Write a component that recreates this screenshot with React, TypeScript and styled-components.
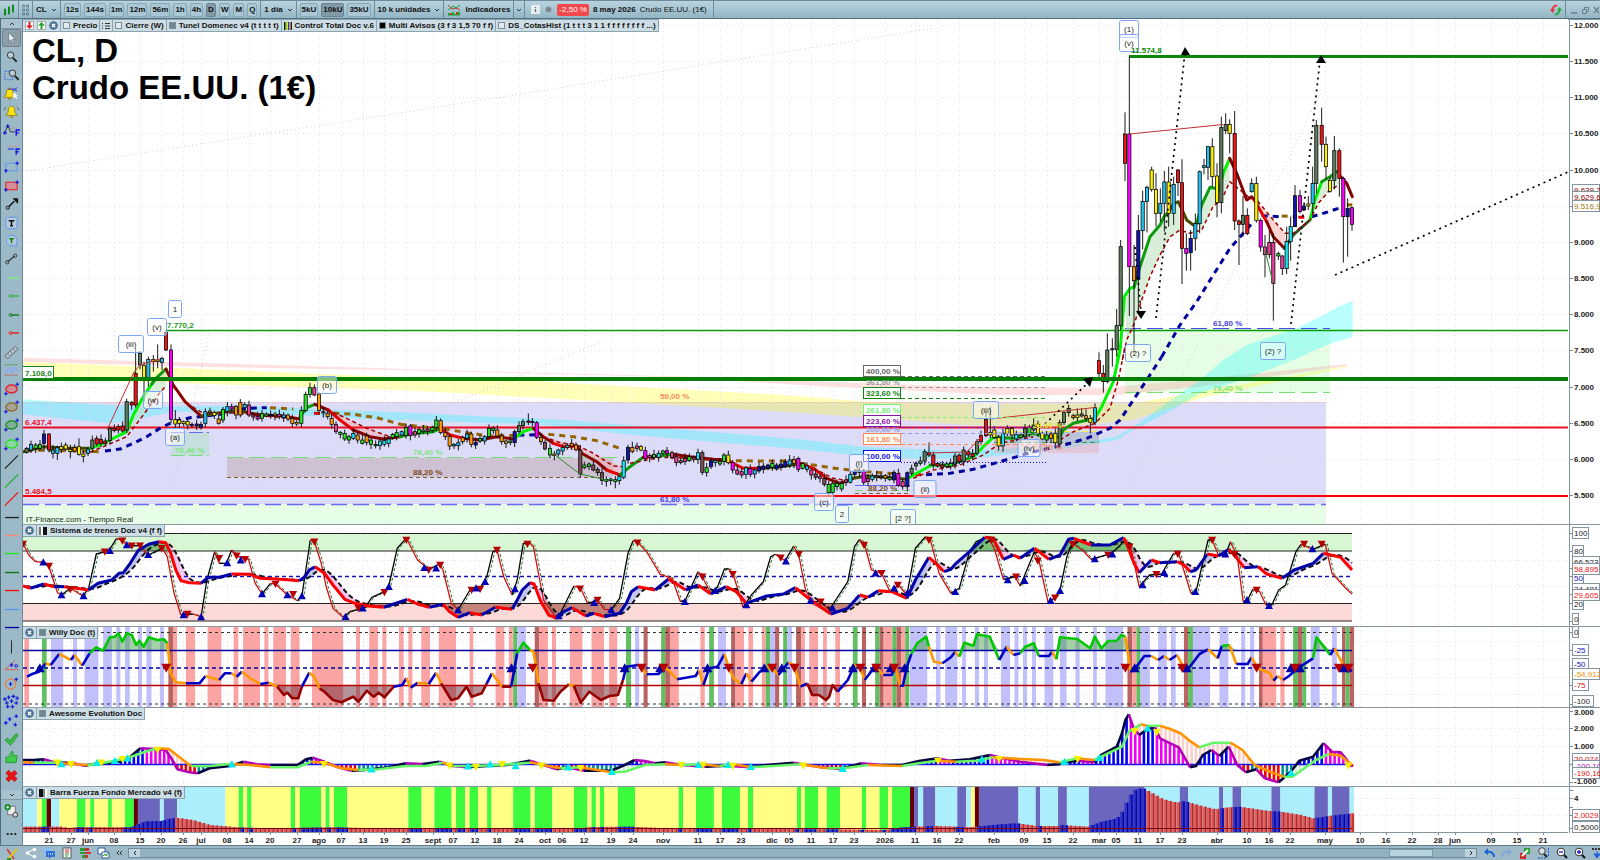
import React from "react";
import styled, { createGlobalStyle } from "styled-components";

/* ---------- shared values ---------- */

const FONT = `"Liberation Sans", Arial, sans-serif`;
const BLUE = "#0000a8";

type Pt = [number, number];

/* Reads "x,y x,y ..." given in units of a chart tile and places it on the chart. */
const at = (ox: number, oy: number, sx: number, text: string): Pt[] =>
  text
    .trim()
    .split(/\s+/)
    .map((p) => {
      const [x, y] = p.split(",").map(Number);
      return [Math.round((ox + x / sx) * 10) / 10, Math.round((oy + y / 3) * 10) / 10] as Pt;
    });

const tiles = (a: string, b: string, c: string): Pt[] => [
  ...at(0, 520, 2.958, a),
  ...at(530, 520, 2.958, b),
  ...at(1060, 520, 2.904, c),
];

const str = (pts: Pt[]) => pts.map((p) => p.join(",")).join(" ");

const valueAt = (pts: Pt[], x: number) => {
  if (x <= pts[0][0]) return pts[0][1];
  for (let i = 1; i < pts.length; i++) {
    if (x <= pts[i][0]) {
      const [x0, y0] = pts[i - 1];
      const [x1, y1] = pts[i];
      return x1 === x0 ? y1 : y0 + ((y1 - y0) * (x - x0)) / (x1 - x0);
    }
  }
  return pts[pts.length - 1][1];
};

const STEP = 4.335;
const FIRST = 22;
const LAST = 1352;
const bars: number[] = [];
for (let x = LAST; x > FIRST; x -= STEP) bars.unshift(x);

/* ---------- price chart data ---------- */

const CANDLE: Record<string, string> = {
  g: "#5d7d5d",
  r: "#f01414",
  m: "#ff00ff",
  c: "#25c1f4",
  a: "#18e4f4",
  y: "#fff200",
  o: "#ff9a0a",
  b: "#1414b4",
  k: "#ea3f9c",
  l: "#28e628",
  n: "#7c5055",
};

interface Candle {
  x: number;
  top: number;
  bottom: number;
  high: number;
  low: number;
  kind: string;
}

const candles = (ox: number, oy: number, text: string): Candle[] =>
  text
    .trim()
    .split(/\s+/)
    .map((t, i) => {
      const m = /^(\d+)([a-z])(\d+)-(\d+)(?:\^(\d+))?(?:_(\d+))?$/.exec(t)!;
      const top = +m[3];
      const bottom = +m[4];
      const high = m[5] ? +m[5] : top - 4 - ((i * 7) % 12);
      const low = m[6] ? +m[6] : bottom + 4 + ((i * 5) % 11);
      return {
        x: ox + +m[1] / 3,
        top: oy + top / 3,
        bottom: oy + bottom / 3,
        high: oy + high / 3,
        low: oy + low / 3,
        kind: m[2],
      };
    });

const PRICES: Candle[] = [
  ...candles(0, 215, `80g700-712 93c688-705 107l690-700 120l688-700 132b657-685^645_710 147r657-705^655_712 159c705-715^690_730
    172c697-715_735 184y695-703 197y690-702 211y703-710_730 224o697-708 237y695-718^670_722 250y717-724_742 264c702-715
    277g675-700 290r670-687 303r673-685 316r678-686 330g640-677 343r640-647 355r635-645 368r633-648 380g560-645 395r562-570
    407r475-570^400 420g415-450^408 432y452-487^440_560 445c433-487^425_515 460y433-440^420_470 473y435-440^388_460
    486c430-442^425_465 498r352-405^345_408 513m405-613^388_625 526y614-627^585_640 538y615-625 551y620-626 563y620-630
    576m628-632 590b627-633 603b628-638 616c590-625^580 630o588-592 643y592-602 656o612-625 669l583-615 682c575-590
    695m575-582 708o574-600 721o563-600 734c568-578 747k570-600 760k600-606 773m605-612 786l595-610 799l597-603 812b598-602
    825y597-602 838k598-605 851c600-608 864o600-612 877o610-625 890y622-627 904l587-625 917l538-587 930l518-538 943k518-540
    957o537-587 970k590-594 983o595-605 995o610-628 1008k628-650 1021l652-658 1034l655-672 1047l665-675 1060a655-670
    1073o660-675 1087l675-685 1100o663-682 1113l675-688 1127l688-692 1140a678-692 1153a677-688 1166a672-685 1178l658-668
    1190l653-665`),
  ...candles(400, 340, `5c275-285 18l262-287 31m258-287 45k275-285 57l268-280 70l270-275 83k268-274 97l262-272 109l240-262^228
    122o242-278 136o278-290 149o290-318_330 162c313-318 175c308-317 188o293-305 201c282-295 214o282-313^275_322 227b307-315
    240l295-303 254c290-303 267l265-290 280l265-272 292o270-288 305o288-305 318o303-310 331l303-308 344b275-308 357g257-275
    369g245-257 385r243-246^220_255 397m244-248 410m248-292 423o292-305 435n307-327 450l325-345 463o342-347 475c330-342
    488a323-333 502a316-322 515o310-318 528o315-328 541n330-402 553l375-383 567l372-380 580n375-390 593n388-398 606n398-421
    619l418-424_440 632l417-422 646l419-425_445 658a410-422 671a362-412 684b322-360 697o322-335^305 711k318-325 723y320-330
    736m332-355 749k347-353 762l343-352 776a340-352 789l333-340 801m332-340 816k338-352 829k350-368 842n362-368 855k355-365
    868l350-362 881k352-358 894a338-358 907n338-397 920l383-397 933b362-380 946a362-368 960l365-372 972l345-365 985y345-368
    998m368-390 1012k390-402 1025k395-405 1038a383-403 1051m385-403 1064c390-402 1077b380-393 1090b378-388 1104b375-385
    1117l370-382 1130b375-387 1143b372-382 1156b365-380 1169c360-375 1182o358-370 1195m355-388`),
  ...candles(800, 340, `8l370-385 21c378-388 34k390-405 47n402-412 60k410-415 73n415-433 86l433-458 98l430-457 111l430-440
    125l430-447_455 138k420-428 151a403-427 164b393-403 178l393-397 191m392-427 204k415-425 217a408-418 230n407-412
    243n408-413 256o407-414 269l412-418 282b397-420 295m400-437 308k425-440 322b398-440 335g385-400 348g370-378 361l363-370
    374g335-363 387r338-345^307 400r345-375 413r370-378 427r375-382 440l372-380 452l370-380 465g348-372 478r345-365
    491g330-365 505r335-345 518r340-350 531g305-340 543r287-305 558r238-287^215 571y278-285^200 583y270-292 596y292-318_332
    609a280-318_335 622y265-280 636y265-285 649a283-297 662l285-293 675g265-290 688l262-280 701g255-270^235 714y252-280
    727y280-297 740l285-300 753o282-295 766y280-308 779g248-312 792g218-248 806g205-218 820o227-233 832y225-232^205
    845g222-228^205 858o227-235^208 871y235-247_280 885c203-247^190`),
  ...candles(1080, 0, `57r1082-1120^1057_1138 70r1120-1145^1095_1178 82g1050-1145^1000_1150 97g1046-1049^1015_1100 110g977-1048^927_1070
    122g740-977^720_992 135r402-490^337_543 148m402-800^170_948 162o800-842^735_1060 175b692-838^645_940 188c604-692^572_748
    201c562-604^557_697 215y510-568^500_575 228y568-640^520_680 241c610-640^565_665 253c546-610^513_695 266y546-640^500_680
    281c553-640^530_675 294r510-548^507_588 306r548-745^478_852 319m745-760^700_812 332b715-758^690_812 346c671-715^640_752
    359c515-671^512_700 372c497-502^477_523 384c440-502^438_540 397y440-530^415_560 411y528-608^490_652 424g382-608^350_640
    437g373-392^340_402 449y373-400^358_460 464r400-663^333_690 477r663-673^658_795 489g646-673^588_710 502r646-701^625_705
    515c550-575^535_578 529y550-661^530_668 542m661-741^655_755 555k741-764^705_832 568k727-764^692_775 580k727-850^700_962
    595l761-768^755_780 607k768-806^765_825 620a724-806^680_822 632a680-724^650_782 645b587-680^555_681 660m587-635^570_640
    672b618-630^610_632 685y612-618^588_630 698c550-610^500_640 709g376-550^360_580 725r376-433^323_485 738y433-500^410_538
    750y541-574^530_578 763g452-541^408_568 778r452-535^445_590 790m535-650^530_788 803b625-650^595_770 816m623-673^620_692`),
];

interface Stroke {
  pts: Pt[];
  color: string;
}
const s3 = (ox: number, oy: number, color: string, text: string): Stroke => ({ pts: at(ox, oy, 3, text), color });

const LIME = "#00f500";
const GREEN = "#0d9a0d";
const WINE = "#850000";
const RED = "#e40000";
const MOSS = "#4a4a00";

const TREND: Stroke[] = [
  s3(0, 215, MOSS, "70,710 130,695 200,700 270,700"),
  s3(0, 215, LIME, "270,700 300,690 380,650 400,600 430,545 460,500"),
  s3(0, 215, GREEN, "455,507 470,488 498,462"),
  s3(0, 215, WINE, "498,462 520,510 555,560 605,605"),
  s3(0, 215, MOSS, "605,603 650,595 700,588 740,592"),
  s3(0, 215, WINE, "740,592 780,600 840,602 900,612"),
  s3(0, 215, GREEN, "900,605 920,578 945,568"),
  s3(0, 215, WINE, "945,568 985,585"),
  s3(0, 215, RED, "985,585 1020,615 1060,645"),
  s3(0, 215, WINE, "1060,645 1110,665 1150,672 1200,665"),
  s3(400, 340, GREEN, "0,290 30,282 100,275 120,265"),
  s3(400, 340, RED, "120,265 150,285 190,295"),
  s3(400, 340, WINE, "190,295 240,300 290,290 340,297"),
  s3(400, 340, LIME, "350,290 370,275 400,265"),
  s3(400, 340, WINE, "400,265 430,290 460,310"),
  s3(400, 340, RED, "460,310 490,320 530,318"),
  s3(400, 340, WINE, "530,318 545,340 590,365 620,390"),
  s3(400, 340, RED, "620,390 660,405"),
  s3(400, 340, GREEN, "660,405 690,380 730,352"),
  s3(400, 340, WINE, "730,352 780,348"),
  s3(400, 340, GREEN, "780,348 820,343"),
  s3(400, 340, WINE, "820,343 870,350 940,358 980,360"),
  s3(400, 340, RED, "980,360 1000,370 1030,385 1080,385"),
  s3(400, 340, MOSS, "1080,385 1140,380 1200,372"),
  s3(800, 340, RED, "0,370 40,385 80,415"),
  s3(800, 340, WINE, "80,415 120,430 160,415"),
  s3(800, 340, MOSS, "160,415 200,408 260,412 320,418"),
  s3(800, 340, LIME, "330,412 350,400 390,378"),
  s3(800, 340, GREEN, "390,375 450,375 520,350"),
  s3(800, 340, LIME, "520,350 550,320 580,292"),
  s3(800, 340, GREEN, "580,292 640,295 700,280 740,290 780,290 790,270 820,250 885,235"),
  s3(800, 340, LIME, "885,235 905,200 940,125 962,20"),
  s3(1080, 0, LIME, "112,1085 122,1030 133,890 150,865 162,862"),
  s3(1080, 0, GREEN, "162,862 180,800 210,710 240,675 255,645 265,638"),
  s3(1080, 0, MOSS, "265,638 280,612 295,605 320,660 340,675 350,670"),
  s3(1080, 0, GREEN, "350,670 365,615 390,562 405,565 418,570"),
  s3(1080, 0, LIME, "418,570 430,520 449,475"),
  s3(1080, 0, WINE, "449,475 470,520 500,600 515,590 523,600"),
  s3(1080, 0, RED, "523,600 540,630 560,665"),
  s3(1080, 0, WINE, "560,665 580,710 613,745"),
  s3(1080, 0, "#245624", "613,745 640,705 690,660"),
  s3(1080, 0, LIME, "690,660 705,600 725,545"),
  s3(1080, 0, GREEN, "725,545 750,530 770,515"),
  s3(1080, 0, WINE, "782,530 800,550 817,590"),
];

const SIGNAL: Stroke[] = [
  s3(0, 215, "#a00000", "270,712 380,665 430,600 470,545 498,512"),
  s3(0, 215, "#a00000", "520,515 560,565 610,595 680,592 780,602 890,612"),
  s3(0, 215, "#a00000", "980,585 1030,605 1100,640 1170,665"),
  s3(400, 340, "#a00000", "430,290 480,308 530,315 580,340 640,378 665,380"),
  s3(400, 340, "#a00000", "690,370 780,352 900,355 1000,365"),
  s3(800, 340, "#a00000", "40,385 100,415 130,420"),
  s3(800, 340, "#a00000", "340,415 400,390 480,375 550,345 600,310 700,290"),
  s3(800, 340, "#a00000", "780,300 820,275 885,250 930,205 955,120 975,20"),
  s3(1080, 0, "#a00000", "127,1080 140,1020 165,965 185,900 210,830 240,765 270,710 300,690 330,700 365,690 400,618 425,600 449,545 480,570 510,595 530,600 580,660 615,700 640,700 690,660 715,610 745,575 775,555"),
];

const BROWN = "#946400";
const SLOW: Stroke[] = [
  s3(0, 215, BROWN, "80,705 160,706 300,710"),
  s3(0, 215, "#00009a", "315,708 360,702 400,685 440,665 480,640 520,620 570,608 620,603 680,595 740,580 800,578"),
  s3(0, 215, BROWN, "810,578 880,582"),
  s3(0, 215, RED, "942,595 965,596"),
  s3(0, 215, BROWN, "1000,594 1060,598 1130,608 1200,628"),
  s3(400, 340, BROWN, "0,253 60,260 130,266 200,278 270,288 340,286"),
  s3(400, 340, "#00009a", "355,286 410,284"),
  s3(400, 340, BROWN, "445,283 520,290 590,302 670,328"),
  s3(400, 340, BROWN, "810,350 980,362 1100,363 1200,362"),
  s3(800, 340, BROWN, "0,370 60,378 120,387 200,395 300,402"),
  s3(800, 340, RED, "345,404 378,404"),
  s3(800, 340, "#00009a", "378,404 450,400 520,388 600,365 700,335 800,313 860,295 930,265 960,240 1000,180 1040,120 1085,50"),
  s3(1080, 0, "#00009a", "245,1070 300,975 350,905 400,825 450,745 490,700 520,665"),
  s3(1080, 0, "#00009a", "545,647 600,650"),
  s3(1080, 0, BROWN, "605,648 650,650"),
  s3(1080, 0, RED, "655,652 690,651"),
  s3(1080, 0, "#00009a", "695,650 740,637 790,620"),
  s3(1080, 0, BROWN, "800,615 817,614"),
];

const YELLOW_BAND = [
  ...at(0, 215, 3, "70,440 1200,487"),
  ...at(400, 340, 3, "400,123 1200,168"),
  ...at(800, 340, 3, "200,185 560,192 1000,190 1200,155 1640,78"),
  ...at(800, 340, 3, "1640,82 1200,175 1000,240 800,260 500,255 0,218"),
  ...at(400, 340, 3, "600,183 0,150"),
  ...at(0, 215, 3, "70,490"),
];
const PINK_BAND = [
  ...at(0, 215, 3, "70,428 1200,461"),
  ...at(400, 340, 3, "0,87 820,109 1200,122"),
  ...at(800, 340, 3, "500,140 900,145 1200,118 1640,72"),
  ...at(800, 340, 3, "1640,78 1200,140 950,165 600,165 0,135"),
  ...at(400, 340, 3, "820,111 0,91"),
  ...at(0, 215, 3, "600,455 70,440"),
];
const CYAN_BAND = [
  ...at(0, 215, 3, "70,553 400,575 700,572 1200,592"),
  ...at(400, 340, 3, "0,217 500,240 1200,298"),
  ...at(800, 340, 3, "200,322 500,333 800,315 950,290 1000,260 1100,190 1200,120"),
  ...at(1080, 0, 3, "430,1080 500,1035 650,985 720,950 775,920 818,903"),
  ...at(1080, 0, 3, "818,1010 740,1035 640,1080 500,1135"),
  ...at(800, 340, 3, "1200,160 1100,220 1000,270 950,300 800,325 500,357 250,355 0,328"),
  ...at(400, 340, 3, "700,285 430,255 0,240"),
  ...at(0, 215, 3, "1200,617 700,590 520,590 400,615 330,625 70,598"),
];
const GREEN_CLOUDS = [
  at(1080, 0, 3, "133,900 162,862 180,800 210,710 240,675 255,645 295,605 300,690 270,710 240,765 210,830 185,900 165,965 140,1020"),
  at(1080, 0, 3, "350,670 365,615 390,562 418,570 449,475 449,545 425,600 400,618 365,690"),
  at(1080, 0, 3, "690,660 705,600 725,545 770,515 775,555 745,575 715,610"),
  at(0, 215, 3, "380,650 400,600 460,500 498,462 498,512 470,545 430,600"),
];
const RED_CLOUDS = [
  at(1080, 0, 3, "535,610 580,660 615,700 620,730 613,745 580,700 550,650"),
  at(400, 340, 3, "430,290 530,315 580,340 665,380 660,405 590,365 545,340 460,310"),
  at(0, 215, 3, "980,585 1030,605 1100,640 1170,665 1150,672 1060,645"),
];

/* ---------- oscillators ---------- */

const SLOW_OSC = tiles(
  `68,198 90,205 130,192 160,200 190,200 225,205 262,210 290,190 330,180 352,160 365,158 385,130 410,90 440,73 470,65 490,68
   505,100 520,150 535,182 560,188 595,190 615,172 650,172 685,162 740,163 770,175 830,178 885,182 900,172 915,150 932,140
   960,160 985,195 1020,238 1050,250 1090,258 1135,262 1165,252 1205,238 1235,252 1270,262 1310,253 1330,275 1355,292
   1390,278 1425,285 1465,262 1515,268 1530,240 1545,210`,
  `0,188 12,192 30,240 55,285 80,295 100,275 125,263 165,288 190,280 220,290 265,280 285,250 300,215 320,200 370,210 410,177
   430,190 460,210 497,195 535,222 580,200 610,215 640,250 700,228 750,222 785,203 830,240 890,282 940,265 975,225 1000,232
   1030,212 1070,215 1115,235 1140,180 1180,112 1205,135 1225,155 1245,148 1260,130 1300,95 1345,52 1370,55 1400,118
   1430,105 1450,115 1492,85 1535,118`,
  `0,105 25,58 40,55 90,75 145,75 185,53 197,80 215,130 230,158 265,120 290,128 340,125 360,135 378,155 395,150 428,102
   460,108 490,88 510,110 535,143 575,140 600,162 645,175 680,150 735,130 765,100 815,112 848,150`
);

const FAST_OSC = tiles(
  `68,70 85,105 105,125 128,127 145,140 170,218 182,225 208,205 245,228 262,205 285,102 322,92 345,55 362,62 378,77 415,77
   438,105 480,85 495,110 515,220 535,285 570,282 595,290 612,180 635,95 648,130 670,130 685,90 700,108 735,118 755,190
   775,222 800,190 815,192 850,225 880,242 893,228 918,60 930,65 950,130 965,200 985,265 1015,292 1035,275 1080,262
   1100,232 1137,215 1150,198 1175,85 1202,55 1235,120 1268,148 1300,132 1310,150 1335,250 1355,270 1390,210 1420,205
   1440,170 1458,95 1470,90 1490,170 1515,225 1530,180 1548,70`,
  `0,70 10,80 40,240 75,290 90,280 130,198 150,205 170,250 200,240 220,268 240,270 265,235 290,100 305,62 320,68 345,95
   385,163 420,175 445,245 460,240 497,155 510,172 535,220 555,200 575,147 588,147 602,165 630,262 655,225 690,185 712,110
   725,103 755,122 780,78 795,105 815,210 835,245 860,245 885,270 940,185 960,80 975,58 990,75 1010,150 1040,160 1065,215
   1090,195 1115,225 1140,85 1170,50 1185,62 1210,160 1245,220 1270,205 1300,95 1320,65 1355,50 1375,90 1400,178 1435,170
   1450,198 1492,95 1505,120 1533,250 1555,230`,
  `0,210 20,110 35,70 65,90 90,118 150,100 190,60 205,80 230,200 260,165 295,162 330,100 345,102 380,220 395,215 430,60
   442,60 460,105 480,105 495,65 515,110 532,245 545,240 560,208 580,215 598,255 615,255 635,210 655,195 685,95 700,73
   735,88 770,72 790,160 830,205 848,222`
);

const FAST_DOWN = tiles(
  `68,72 145,138 208,208 310,95 362,62 390,77 414,77 478,85 555,282 648,115 700,107 725,118 815,192 867,223 930,65 1060,265
   1137,217 1202,60 1268,150 1302,135 1395,210 1420,207 1470,90 1560,72`,
  `148,206 200,240 318,68 510,170 600,163 742,113 795,103 860,245 988,75 1040,160 1088,195 1180,60 1365,60 1438,170 1502,122
   1553,233`,
  `37,73 140,105 202,80 280,163 342,102 442,60 507,103 571,210 709,72 760,72`
);
const FAST_UP = tiles(
  `128,127 182,225 247,228 325,92 375,75 438,104 543,285 595,291 672,129 712,121 775,222 850,225 893,228 1022,290 1073,265
   1150,200 1255,143 1290,145 1355,270 1408,205 1435,185 1523,207`,
  `85,288 190,248 240,270 458,245 548,212 640,255 757,124 830,242 895,265 1022,160 1077,205 1117,218 1258,215 1413,180
   1463,182 1540,242`,
  `0,212 101,117 152,103 240,195 303,158 393,215 480,103 543,240 607,257 733,87`
);

const WILLY = tiles(
  `80,470 95,462 115,455 135,430 150,435 175,402 210,420 220,405 243,437 265,400 285,382 305,392 325,352 340,350 350,340
   362,365 375,340 390,345 403,375 412,362 425,380 440,352 465,360 485,358 495,370 505,460 520,487 550,490 590,490 608,468
   648,480 665,460 685,460 700,470 715,455 740,475 770,492 795,488 820,500 840,525 850,518 865,535 882,535 893,500 915,458
   930,470 945,505 960,515 985,540 1010,547 1045,530 1060,545 1085,512 1105,530 1120,518 1137,532 1165,500 1190,495
   1202,475 1215,503 1235,488 1268,492 1290,458 1305,490 1335,540 1355,535 1380,500 1395,530 1425,520 1440,490 1455,460
   1470,480 1485,500 1512,500 1530,400 1548,368`,
  `0,390 10,395 18,440 25,490 40,540 70,542 90,515 115,493 130,498 150,548 175,515 210,540 235,528 260,525 275,480 285,440
   320,435 345,463 380,462 400,440 435,478 490,468 500,450 513,495 530,445 555,440 575,402 590,450 605,478 625,492 640,460
   655,485 680,455 700,440 720,450 735,465 765,427 780,435 800,500 820,490 835,525 855,525 875,540 885,530 895,495 910,515
   940,480 960,435 975,440 990,480 1020,440 1045,465 1070,465 1080,440 1095,497 1103,497 1115,440 1128,402 1145,370
   1172,350 1180,380 1195,425 1220,430 1245,412 1258,395 1270,410 1285,368 1312,377 1322,343 1360,350 1388,420 1410,380
   1430,405 1450,400 1465,380 1490,370 1505,408 1535,408 1545,395 1557,418`,
  `0,352 50,357 88,385 101,350 120,385 140,363 165,362 178,345 190,350 205,455 215,450 245,408 265,408 285,420 302,408
   318,420 340,405 360,445 372,447 405,402 430,388 458,415 470,378 492,375 512,432 545,432 556,412 575,445 610,460 620,482
   632,468 648,480 665,468 690,445 735,415 745,352 785,405 797,385 815,420 835,455 848,450`
);
const WILLY_UP = tiles("118,445 1513,445", "280,445 385,445 525,445 693,445 745,445 955,445 1018,445 1067,445 1108,445", "217,445 368,445 670,445 697,445 823,445");
const WILLY_DOWN = tiles("492,443", "8,443 330,443 395,443 588,443 716,443 782,443 977,443 1024,443 1077,443", "190,443 355,443 571,443 683,443 810,443 838,443");

interface Band {
  kind: string;
  from: number;
  to: number;
}
const spans = (ox: number, sx: number, text: string): Band[] =>
  text
    .trim()
    .split(/\s+/)
    .map((t) => {
      const [a, b] = t.slice(1).split("-").map(Number);
      return { kind: t[0], from: ox + a / sx, to: ox + b / sx };
    });

const WILLY_COLOR: Record<string, string> = { p: "#fba4a4", v: "#c1c0fb", g: "#62bf62", d: "#bb6464" };
const WILLY_BANDS = [
  ...spans(0, 2.958, `p72-86 g124-138 v151-187 v216-228 v250-291 v305-331 v344-356 v370-384 v408-420 v433-448 v473-485 d498-512
    p512-524 p550-577 p614-655 p691-705 p719-769 p782-794 p808-846 p860-886 p923-1015 p1053-1065 p1092-1118 p1131-1143
    p1180-1194 p1208-1220 p1246-1272 p1298-1349 p1389-1400 p1466-1492 p1505-1517 g1518-1530 v1530-1556`),
  ...spans(530, 2.958, `d14-27 p27-53 p65-77 p118-155 p182-219 p234-258 g284-299 v311-323 d336-348 g388-400 d400-414 p414-440
    p504-517 g530-544 v556-580 d595-608 p608-633 p646-660 p686-697 g697-710 v710-725 d725-737 g749-761 v761-775 d787-802
    p802-813 p826-852 p867-878 p903-917 g955-969 d982-994 g1021-1034 d1034-1046 p1046-1072 g1072-1084 d1084-1098
    p1098-1110 g1110-1122 v1124-1175 v1201-1214 v1228-1264 v1278-1290 v1316-1328 v1343-1355 v1393-1420 v1433-1445
    v1458-1470 v1485-1497 v1522-1548`),
  ...spans(1060, 2.904, `v0-19 v45-57 v96-107 v132-183 d196-210 p210-222 g222-234 v234-261 v285-310 v322-336 d360-372 g372-386
    v386-436 v463-489 v526-538 v552-564 d578-589 p589-628 p640-652 g677-691 d691-704 g704-715 v728-754 v790-804 d819-829
    g829-841 d841-854`),
];

const AO_FAST = tiles(
  `68,720 100,720 130,718 165,728 210,728 250,737 290,730 340,728 380,715 415,685 460,687 490,690 510,720 525,748 560,757
   585,760 620,745 680,738 720,725 760,733 800,735 880,735 905,718 925,713 960,725 1000,742 1040,752 1080,750 1150,742
   1200,730 1250,732 1300,725 1340,738 1380,742 1440,738 1500,735 1566,722`,
  `0,722 40,735 80,748 110,742 160,752 240,752 280,735 310,720 340,723 370,730 400,727 450,735 520,740 580,737 650,742
   700,735 780,728 850,740 920,748 980,730 1040,735 1100,735 1150,723 1205,715 1240,722 1300,718 1360,705 1400,715
   1450,725 1530,735 1566,733`,
  `0,730 50,722 100,727 120,705 165,680 180,640 190,600 200,583 212,620 230,645 250,630 275,620 290,655 345,682 360,710
   378,742 395,738 415,705 440,690 463,708 490,680 515,735 540,757 570,748 595,775 635,787 670,755 695,722 735,710 765,670
   790,695 815,697 835,722 848,740`
);
const AO_SLOW = tiles(
  `68,726 100,728 165,728 210,732 260,735 300,730 375,715 430,695 465,685 500,687 535,715 565,738 620,738 680,732 740,735
   800,742 880,742 920,725 960,728 1010,745 1060,750 1120,748 1200,738 1260,738 1310,728 1340,738 1400,738 1480,735
   1566,728`,
  `0,727 40,735 90,745 150,742 240,757 280,755 340,735 400,733 450,735 500,733 560,738 600,732 655,742 720,738 800,733
   880,745 930,745 1000,735 1100,738 1150,730 1205,722 1260,725 1320,722 1370,712 1450,717 1520,720 1566,727`,
  `0,727 50,715 100,720 130,705 180,680 200,635 235,613 255,618 290,617 320,627 350,640 380,665 405,682 445,668 495,668
   530,690 565,735 610,755 650,770 675,770 710,745 740,722 780,702 815,707 848,735`
);
const AO_UP = tiles("182,732 287,728 340,722 377,715 686,733 1099,748 1384,739 1450,733 1525,738", "113,742 242,755 498,734 586,734 653,740 925,746 1337,718", "13,725 115,713 254,625 671,758");
const AO_DOWN = tiles("170,728 210,733 300,728 362,718 466,690 958,733 1330,737 1408,741 1485,733", "33,737 150,745 447,735 512,735 600,738 808,737 1207,723 1387,718", "51,718 217,634 281,637 837,737");

/* Each mark starts a band that runs to the next one. */
const marks = (ox: number, sx: number, text: string) =>
  text
    .trim()
    .split(/\s+/)
    .map((t) => ({ kind: t[0], from: ox + Number(t.slice(1)) / sx }));

const FORCE_COLOR: Record<string, string> = { y: "#ffff84", g: "#3cfb3c", c: "#adeefc", v: "#6b67be", d: "#640000" };
const FORCE_MARKS = [
  ...marks(0, 2.958, `c68 y110 g124 d138 c151 y176 g228 y253 g267 y279 g320 y331 g370 d396 v408 c473 v485 c524 y667 g706 y719
    g731 y744 g860 y873 g887 y950 g963 y975 g988 y1027 g1208 y1247 g1285 y1336 g1349 y1376 g1389 y1414 g1441 y1454 g1518`),
  ...marks(530, 2.958, `y2 g14 y66 g130 y170 g182 y195 g207 y219 g260 y311 g440 y453 g491 y544 g568 y621 g645 y660 g790 y802
    g813 y852 g878 y917 g982 y994 g1034 y1059 g1071 d1124 v1136 c1148 v1163 c1199 v1264 c1290 y1305 d1316 v1328 c1445
    v1496 c1509 v1562`),
  ...marks(1060, 2.904, "c20 v84 c246 v348 c372 v462 c474 v501 c526 v614 c640 v739 c778 v790 c841"),
];
const FORCE_BANDS: Band[] = FORCE_MARKS.map((m, i) => ({ ...m, to: FORCE_MARKS[i + 1]?.from ?? 1354 }));
const FORCE = tiles(
  `68,920 180,920 200,924 230,922 390,922 410,912 430,904 480,903 495,897 520,893 570,900 620,915 700,922 800,925 900,923
   1000,922 1100,925 1566,927`,
  `0,928 150,925 180,921 300,920 400,925 900,928 1050,930 1100,922 1200,918 1300,922 1400,912 1440,910 1500,918 1566,918`,
  `0,915 80,920 120,905 165,895 185,870 200,830 220,808 240,804 260,815 300,838 340,848 360,843 400,855 450,868 480,863
   520,860 600,872 640,875 700,885 735,895 780,888 850,880`
);

const DATES: [number, string][] = [
  [49, "21"], [71, "27"], [88, "jun"], [114, "08"], [140, "15"], [161, "20"], [183, "26"], [201, "jul"], [227, "08"], [249, "14"],
  [270, "20"], [297, "27"], [319, "ago"], [341, "07"], [363, "13"], [384, "19"], [406, "25"], [433, "sept"], [453, "07"],
  [475, "12"], [497, "18"], [519, "24"], [545, "oct"], [562, "06"], [584, "12"], [611, "19"], [633, "24"], [663, "nov"],
  [698, "11"], [720, "17"], [741, "23"], [772, "dic"], [789, "05"], [811, "11"], [833, "17"], [854, "23"], [885, "2026"],
  [915, "11"], [937, "16"], [959, "22"], [994, "feb"], [1024, "09"], [1047, "15"], [1073, "22"], [1099, "mar"], [1116, "05"],
  [1138, "11"], [1160, "17"], [1182, "23"], [1217, "abr"], [1247, "10"], [1269, "16"], [1290, "22"], [1325, "may"],
  [1360, "10"], [1386, "16"], [1412, "22"], [1438, "28"], [1455, "jun"], [1491, "09"], [1517, "15"], [1543, "21"],
];

/* ---------- page frame ---------- */

const Global = createGlobalStyle`
  *, *::before, *::after { box-sizing: border-box; }
  body { margin: 0; background: #9dbac8; font-family: ${FONT}; font-size: 8px; color: #111; }
  button { font: inherit; color: inherit; margin: 0; padding: 0; border: 0; background: none; }
`;

const Page = styled.div`
  display: grid;
  grid-template-rows: 19px minmax(0, 1fr) 15px;
  height: 100vh;
`;

const TopBar = styled.header`
  display: flex;
  align-items: center;
  background: linear-gradient(#b9d3df, #94b6c5);
  border-top: 1px solid #6f8b99;
  border-bottom: 1px solid #52707f;
  font-weight: bold;
  white-space: nowrap;
`;

const Group = styled.div<{ $gap?: number; $pad?: number }>`
  display: flex;
  align-items: center;
  height: 100%;
  gap: ${(p) => p.$gap ?? 3}px;
  padding: 0 ${(p) => p.$pad ?? 3}px;
  border-right: 1px solid #6e8c9a;
`;

const Period = styled.button<{ $on?: boolean }>`
  height: 14px;
  padding: 0 1px;
  border: 1px solid ${(p) => (p.$on ? "#6b8490" : "#8aa7b4")};
  border-radius: 2px;
  background: ${(p) => (p.$on ? "#8299a6" : "#a9c7d5")};
  font-weight: bold;
`;

const Picker = styled.button`
  display: flex;
  align-items: center;
  gap: 4px;
  height: 100%;
  font-weight: bold;
`;

const Change = styled.span`
  height: 12px;
  padding: 0 2px;
  border-radius: 2px;
  background: #f4494c;
  color: #fff;
  font-weight: normal;
  line-height: 12px;
`;

const Plain = styled.span`
  font-weight: normal;
`;

const Spring = styled.div`
  flex: 1;
`;

const Body = styled.div`
  display: flex;
  min-height: 0;
`;

const Tools = styled.nav`
  display: flex;
  flex-direction: column;
  width: 23px;
  flex: none;
  background: #9cb9c7;
  border-left: 1px solid #4d6c7d;
  border-right: 1px solid #6d8796;
`;

const ToolList = styled.div`
  display: flex;
  flex-direction: column;
  flex: 1;
  min-height: 0;
  padding-bottom: 5px;
`;

const Tool = styled.button<{ $on?: boolean }>`
  display: flex;
  align-items: center;
  justify-content: center;
  flex: 1;
  min-height: 0;
  margin: 0 1px;
  border: 1px solid ${(p) => (p.$on ? "#75848c" : "transparent")};
  border-radius: 2px;
  background: ${(p) => (p.$on ? "#8c9ea8" : "none")};
`;

const Fold = styled.button`
  display: flex;
  align-items: center;
  justify-content: center;
  height: 10px;
  flex: none;
  background: #a9c4d0;
  border-bottom: 1px solid #7d98a6;
`;

const ToolFoot = styled.div`
  display: flex;
  flex-direction: column;
  height: 45px;
  flex: none;
`;

const Charts = styled.main`
  display: grid;
  grid-template-rows: 505fr 102fr 81fr 79fr 47fr 12fr;
  flex: 1;
  min-width: 0;
  background: #fff;
`;

const Panel = styled.section`
  position: relative;
  display: flex;
  min-height: 0;
`;

const Plot = styled.svg`
  display: block;
  flex: 1;
  min-width: 0;
  height: 100%;
  font: bold 8px ${FONT};
`;

const Scale = styled.svg`
  display: block;
  flex: none;
  width: 32px;
  height: 100%;
  font: bold 8px ${FONT};
`;

const Legend = styled.div`
  position: absolute;
  top: 0;
  left: 0;
  display: flex;
  height: 13px;
  border: 1px solid #8da3ae;
  border-left: 0;
  background: #cddde5;
  font-weight: bold;
  white-space: nowrap;
`;

const LegendItem = styled.span`
  display: flex;
  align-items: center;
  gap: 3px;
  padding: 0 2px;
  border-right: 1px solid #8da3ae;
  &:last-child { border-right: 0; }
`;

const Swatch = styled.i<{ $fill: string }>`
  width: 7px;
  height: 7px;
  border: 1px solid #7c8f99;
  background: ${(p) => p.$fill};
`;

const Mini = styled.button`
  display: flex;
`;

const Title = styled.h1`
  position: absolute;
  top: 13px;
  left: 9px;
  margin: 0;
  font-size: 33px;
  line-height: 37px;
  color: #000;
`;

const Foot = styled.footer`
  display: flex;
  align-items: center;
  gap: 6px;
  padding: 0 0 0 5px;
  background: #9ebac8;
  border-top: 1px solid #5f7c8b;
`;

const Track = styled.div`
  display: flex;
  flex: 1;
  height: 10px;
  border: 1px solid #6f8d9c;
  background: #94b1bf;
`;

const TrackPad = styled.div<{ $grow: number }>`
  flex: ${(p) => p.$grow} 0 0;
`;

const Thumb = styled.div`
  flex: 42 0 0;
  background: #b7d3e0;
  border: 1px solid #7d9aa9;
`;

const Arrow = styled.button`
  display: flex;
  align-items: center;
  justify-content: center;
  width: 11px;
  background: #bdd4df;
`;

/* ---------- icons ---------- */

const Svg = ({ w = 18, h = 16, children }: { w?: number; h?: number; children: React.ReactNode }) => (
  <svg width={w} height={h} viewBox={`0 0 ${w} ${h}`} fill="none" aria-hidden="true">
    {children}
  </svg>
);

const Chevron = ({ up }: { up?: boolean }) => (
  <Svg w={6} h={4}>
    <path d={up ? "M1 3l2-2 2 2" : "M1 1l2 2 2-2"} stroke="#333" />
  </Svg>
);

const Cross = () => (
  <Svg w={9} h={9}>
    <circle cx="4.5" cy="4.5" r="4.3" fill="#4a6d92" />
    <path d="M2.8 2.8l3.4 3.4M6.2 2.8l-3.4 3.4" stroke="#fff" strokeWidth="1.3" />
  </Svg>
);

const Pin = ({ color, up }: { color: string; up?: boolean }) => (
  <Svg w={9} h={9}>
    <rect x=".5" y=".5" width="8" height="8" fill="#fff" stroke="#aaa" />
    <path d={up ? "M4.500 1L8 4.500H5.500V8h-2V4.500H1z" : "M4.500 8L1 4.500h2.500V1h2v3.500H8z"} fill={color} />
  </Svg>
);

const Stripes = ({ colors }: { colors: string[] }) => (
  <Svg w={8} h={8}>
    {colors.map((c, i) => (
      <rect key={i} x={(i * 8) / colors.length} y="0" width={8 / colors.length} height="8" fill={c} />
    ))}
  </Svg>
);

const plus = (x: number, y: number) => <path d={`M${x - 2} ${y}h4M${x} ${y - 2}v4`} stroke="#1212dd" strokeWidth="1.2" />;
const Glass = ({ x = 8, y = 6 }) => (
  <>
    <circle cx={x} cy={y} r="3.4" fill="#b8cdd6" stroke="#333" />
    <path d={`M${x + 2.5} ${y + 3}l4 4`} stroke="#222" strokeWidth="2" />
  </>
);
const Bell = ({ x = 0 }) => (
  <g transform={`translate(${x} 0)`}>
    <path d="M9 2c-3 0-3.500 3-3.500 6.500L3 11.500h12l-2.500-3C12.500 5 12 2 9 2z" fill="#ffe414" stroke="#8d7600" strokeWidth=".8" />
    <path d="M7.500 12.500h3L9 14.500z" fill="#c9a900" stroke="#8d7600" strokeWidth=".5" />
  </g>
);
const Ray = ({ color }: { color: string }) => (
  <>
    <path d="M9 8h8" stroke={color} strokeWidth="1.400" />
    <circle cx="8" cy="8" r="1.500" stroke={color} />
  </>
);
const Oval = ({ color, fill }: { color: string; fill: string }) => (
  <>
    <ellipse cx="9" cy="8" rx="6" ry="4.300" stroke={color} fill={fill} strokeWidth="1.300" />
    {plus(3, 13)}
    {plus(15, 3)}
  </>
);
const Slash = ({ color }: { color: string }) => <path d="M2 15L16 1" stroke={color} strokeWidth="1.300" />;
const Rule = ({ color }: { color: string }) => <path d="M2 7.500h15" stroke={color} strokeWidth="1.400" />;

const TOOLS: [string, React.ReactNode][] = [
  ["Cursor", <path d="M6 2v10l2.500-2 2 4 1.500-1-2-3.500h3z" fill="#e6eef2" stroke="#68747b" strokeWidth=".8" />],
  ["Lupa", <Glass />],
  ["Zoom de zona", <><path d="M2 4h8v9H2z" stroke="#2f6fe8" strokeDasharray="2 1" /><Glass x={10} y={6} /></>],
  ["Alerta rápida", <><Bell x={-2} /><path d="M5 3h6M11 2l4 3M15 1l-4 4" stroke="#2424cc" /><path d="M11 6v7l2-1.500 1 2 1-.5-1-2.500h2z" fill="#fff" /></>],
  ["Alerta", <><Bell /><path d="M3 3L1 6M15 3l2 3" stroke="#555" /></>],
  ["Patrón Fibonacci", <><path d="M2 11l3-8 3 7h5" stroke="#333" /><path d="M8 6h7" stroke="#d97a6a" strokeDasharray="1 1" />{plus(2, 11)}{plus(5, 4)}<path d="M14 14V8h4M14 11h3" stroke="#1212ee" strokeWidth="1.500" /></>],
  ["Fibonacci", <><path d="M5 5h11" stroke="#d97a6a" strokeDasharray="1 1" /><path d="M5 8h7" stroke="#1515d8" /><path d="M14 14V8h4M14 11h3" stroke="#1212ee" strokeWidth="1.500" /></>],
  ["Zona azul", <><path d="M3 4h12v8H3z" stroke="#5e94f2" />{plus(3, 12)}{plus(15, 4)}</>],
  ["Zona roja", <><path d="M3 4h12v8H3z" stroke="#e01818" fill="#d3909a" />{plus(3, 12)}{plus(15, 4)}</>],
  ["Flecha", <><circle cx="5" cy="12" r="1.700" stroke="#111" /><path d="M6 11l6-6" stroke="#111" strokeWidth="1.600" /><path d="M16 2v6l-6-6z" fill="#111" /></>],
  ["Texto", <><rect x="3" y="2" width="12" height="12" rx="2" stroke="#5e94f2" fill="#b5cbdb" /><path d="M6 5.500h6M9 5v6M7.500 11h3" stroke="#111" strokeWidth="1.600" /></>],
  ["Comentario", <><path d="M9 2a6 5.500 0 1 0 3 10.500l2 2v-4A6 5.500 0 0 0 9 2z" stroke="#5e94f2" fill="#b5cbdb" /><path d="M6.500 5.500h5M9 5v5.500" stroke="#108010" strokeWidth="1.600" /></>],
  ["Segmento", <><path d="M5 11l7-6" stroke="#333" strokeWidth="1.300" /><circle cx="4.500" cy="11.500" r="1.700" stroke="#333" /><circle cx="13" cy="4.500" r="1.700" stroke="#333" /></>],
  ["Rayo verde claro", <Ray color="#7ff07f" />],
  ["Rayo verde", <Ray color="#2fae3a" />],
  ["Rayo verde oscuro", <Ray color="#0a740a" />],
  ["Rayo rojo", <Ray color="#f01010" />],
  ["Regla", <path d="M2 12L13 2l3 3L5 15zM5 10l1.500 1.500M8 7.500L9.500 9M11 5l1.500 1.500" stroke="#5d6870" fill="#b3c1c9" />],
  ["Canal", <><path d="M2 2.500h14" stroke="#1a941a" strokeDasharray="1 1" /><path d="M2 13.500h14" stroke="#d22" strokeDasharray="1 1" /><path d="M2 12l4-6 3 4 3-5 4 4" stroke="#8fa4f5" strokeWidth="1.500" /></>],
  ["Elipse roja", <Oval color="#e01818" fill="#cc9099" />],
  ["Elipse marrón", <Oval color="#8a6424" fill="#a7a493" />],
  ["Elipse verde", <Oval color="#148a14" fill="#7fb19c" />],
  ["Elipse lima", <Oval color="#19e519" fill="#8fd6a5" />],
  ["Línea negra", <Slash color="#222" />],
  ["Línea verde", <Slash color="#22b022" />],
  ["Línea roja", <Slash color="#f01010" />],
  ["Horizontal negra", <Rule color="#222" />],
  ["Horizontal salmón", <Rule color="#fb8672" />],
  ["Horizontal lima", <Rule color="#12f012" />],
  ["Horizontal verde", <Rule color="#0a740a" />],
  ["Horizontal roja", <Rule color="#f01010" />],
  ["Horizontal celeste", <Rule color="#5e94f2" />],
  ["Horizontal azul", <Rule color="#0000a0" />],
  ["Vertical", <path d="M9 1v14" stroke="#222" />],
  ["Ángulo", <><path d="M2 13L13 3M2 13h14" stroke="#dd5a50" />{plus(9, 8)}<circle cx="14" cy="9" r="1.500" stroke="#1212dd" /></>],
  ["Ciclo", <><circle cx="8" cy="8" r="5.500" stroke="#ee7a3c" strokeWidth="1.300" />{plus(8, 8)}{plus(14, 3)}</>],
  ["Ondas de impulso", <>{plus(2, 5)}{plus(6, 3)}{plus(11, 2)}{plus(15, 4)}{plus(4, 9)}{plus(9, 7)}{plus(14, 9)}{plus(5, 13)}{plus(10, 13)}</>],
  ["Ondas correctivas", <><path d="M3 4l10 9M3 12l9-8" stroke="#6f9de8" strokeDasharray="2 1" />{plus(3, 11)}{plus(7, 7)}{plus(14, 4)}{plus(13, 13)}</>],
  ["Aceptar", <path d="M2 9l3-2 2 3 7-8 2 2-8 11z" fill="#35bd41" stroke="#188222" strokeWidth=".6" />],
  ["Me gusta", <path d="M3 8h3l3-6c2 0 2 2 1.500 4.500H15l-1 7.500H6H3z" fill="#3fcb4c" stroke="#188222" strokeWidth=".7" />],
  ["Borrar", <path d="M3 5l3-3 3 3 3-3 3 3-3 3 3 3-3 3-3-3-3 3-3-3 3-3z" fill="#ee1111" stroke="#a50000" strokeWidth=".6" />],
];

/* ---------- chart pieces ---------- */

const Poly = ({ pts, color, width = 1, dash, cap }: { pts: Pt[]; color: string; width?: number; dash?: string; cap?: "round" }) => (
  <polyline points={str(pts)} fill="none" stroke={color} strokeWidth={width} strokeDasharray={dash} strokeLinejoin="round" strokeLinecap={cap} />
);

const H = ({ y, x1 = 23, x2 = 1352, color, width = 1, dash }: { y: number; x1?: number; x2?: number; color: string; width?: number; dash?: string }) => (
  <line x1={x1} x2={x2} y1={y} y2={y} stroke={color} strokeWidth={width} strokeDasharray={dash} />
);

const Block = ({ x1, x2, y1, y2, fill }: { x1: number; x2: number; y1: number; y2: number; fill: string }) => (
  <rect x={x1} y={y1} width={x2 - x1} height={y2 - y1} fill={fill} />
);

const Grid = ({ top, bottom, rows }: { top: number; bottom: number; rows: number[] }) => (
  <g stroke="#e3e3ea" strokeDasharray="1 3">
    {DATES.map(([x], i) => (
      <line key={i} x1={x + 0.5} x2={x + 0.5} y1={top} y2={bottom} />
    ))}
    {rows.map((y) => (
      <line key={y} x1="23" x2="1568" y1={y} y2={y} />
    ))}
  </g>
);

const Tri = ({ at: [x, y], up, color, r = 4 }: { at: Pt; up?: boolean; color: string; r?: number }) => (
  <path d={up ? `M${x} ${y - r}l${r} ${r * 1.8}h${-2 * r}z` : `M${x} ${y + r}l${r} ${-r * 1.8}h${-2 * r}z`} fill={color} />
);

/* Splits a line into runs of one colour. */
const runs = (pts: Pt[], pick: (a: Pt, b: Pt) => string): Stroke[] => {
  const out: Stroke[] = [];
  for (let i = 1; i < pts.length; i++) {
    const color = pick(pts[i - 1], pts[i]);
    const last = out[out.length - 1];
    if (last && last.color === color) last.pts.push(pts[i]);
    else out.push({ color, pts: [pts[i - 1], pts[i]] });
  }
  return out;
};

const Runs = ({ list, width }: { list: Stroke[]; width: number }) => (
  <>
    {list.map((r, i) => (
      <Poly key={i} pts={r.pts} color={r.color} width={width} />
    ))}
  </>
);

const Edge = ({ y }: { y: number }) => <line x1="0" x2="1600" y1={y + 0.5} y2={y + 0.5} stroke="#8495a0" />;

interface Mark {
  y: number;
  text: string;
  color?: string;
  box?: boolean;
}

const Axis = ({ top, height, marks: list, ticks }: { top: number; height: number; marks: Mark[]; ticks: number[] }) => (
  <Scale viewBox={`1568 ${top} 32 ${height}`} preserveAspectRatio="xMinYMin meet">
    <path d={`M1569.5 ${top}v${height}`} stroke="#8495a0" />
    {ticks.map((y) => (
      <path key={y} d={`M1569 ${y}h4`} stroke="#7b8d98" />
    ))}
    {list.map((m) => (
      <g key={m.y}>
        {m.box && <rect x="1572.5" y={m.y - 5.5} width={m.text.length > 4 ? 27 : m.text.length * 5 + 1} height="11" fill="#fff" stroke="#8495a0" />}
        <text x="1574" y={m.y + 3} fill={m.color ?? "#222"} fontWeight={m.box ? "normal" : "bold"}>{m.text}</text>
      </g>
    ))}
    <Edge y={top} />
  </Scale>
);

const Wave = ({ x, y, text }: { x: number; y: number; text: string }) => {
  const w = text.length * 3 + 10;
  return (
    <g>
      <rect x={x - w / 2} y={y - 8.5} width={w} height="17" rx="2" fill="#fff" fillOpacity=".5" stroke="#7ba6f0" />
      <text x={x} y={y + 3} textAnchor="middle" fontWeight="normal" fill="#222">{text}</text>
    </g>
  );
};

const FIBS: [number, string, string, boolean, number, string][] = [
  [382, "361,80 %", "#999", false, 387, "4 3"],
  [371, "400,00 %", "#666", true, 376, "4 3"],
  [393, "323,60 %", "#0b8a0b", true, 398, "4 3"],
  [410, "261,80 %", "#77ee77", true, 417, "4 3"],
  [429, "200,00 %", "#9a9ae0", false, 433, "4 3"],
  [421, "223,60 %", "#8a14a8", true, 427, "4 3"],
  [439, "161,80 %", "#ff8a50", true, 444, "4 3"],
  [456, "100,00 %", "#1010e8", true, 462, "1 2"],
];

const priceY = (v: number) => Math.round(25 + (12000 - v) * 0.0723) + 0.5;
const PRICE_LEVELS = [12000, 11500, 11000, 10500, 10000, 9500, 9000, 8500, 8000, 7500, 7000, 6500, 6000, 5500];

const PriceChart = () => (
  <Plot viewBox="23 19 1545 505" preserveAspectRatio="xMinYMin meet" role="img" aria-label="Gráfico de precio de CL">
    <Block x1={23} x2={1326} y1={402} y2={504} fill="#dddcf8" />
    <Block x1={23} x2={1326} y1={504} y2={524} fill="#e6fde6" />
    <Block x1={1125} x2={1330} y1={329} y2={392} fill="#e6fde6" />
    <polygon points={str(PINK_BAND)} fill="#f00" fillOpacity=".12" />
    <polygon points={str(YELLOW_BAND)} fill="#ff0" fillOpacity=".28" />
    <polygon points={str(CYAN_BAND)} fill="#0ff" fillOpacity=".27" />
    <Grid top={19} bottom={524} rows={PRICE_LEVELS.map(priceY)} />
    <g stroke="#cfcfd6" strokeDasharray="1 3">
      <path d="M26 171L400 113L935 28M300 460L400 425L606 340M235 495L300 462M171 495L210 330M1190 360L1322 90M1128 490L1190 360M940 476L1050 491M1040 440L1000 490" fill="none" />
    </g>
    <H y={402.5} x2={1326} color="#f7a68c" dash="1 2" />
    <H y={504.5} x2={1326} color="#6a6af0" dash="16 6" width={1.5} />
    <Block x1={227} x2={613} y1={458} y2={477} fill="rgba(160,110,100,.25)" />
    <H y={457.5} x1={227} x2={620} color="#76e076" dash="16 6" />
    <H y={477.500} x1={227} x2={600} color="#8a5a28" dash="4 3" />
    <Block x1={171} x2={209} y1={432} y2={455} fill="rgba(170,225,190,.45)" />
    <H y={432.5} x1={171} x2={209} color="#6a6af0" dash="14 4" />
    <H y={455.500} x1={171} x2={209} color="#76e076" dash="14 4" />
    <Block x1={994} x2={1099} y1={432} y2={443} fill="rgba(120,150,160,.35)" />
    <Block x1={994} x2={1099} y1={443} y2={452} fill="rgba(230,160,170,.35)" />
    <H y={431.5} x1={1010} x2={1099} color="#f2ee3c" dash="6 3" />
    <H y={442.5} x1={994} x2={1099} color="#2f9a4a" dash="5 3" />
    <H y={452.5} x1={994} x2={1099} color="#f7a68c" dash="1 2" />
    <H y={485.5} x1={855} x2={910} color="#6a6af0" />
    <H y={490.5} x1={855} x2={910} color="#76e076" dash="8 4" />
    <H y={493.5} x1={855} x2={910} color="#8a5a28" dash="4 3" />
    <H y={328.5} x1={1125} x2={1330} color="#4a4ae8" dash="16 6" />
    <H y={392.5} x1={1125} x2={1330} color="#76e076" dash="16 6" />

    {GREEN_CLOUDS.map((c, i) => <polygon key={i} points={str(c)} fill="#bfe3bf" fillOpacity=".6" />)}
    {RED_CLOUDS.map((c, i) => <polygon key={i} points={str(c)} fill="#f5a8a8" fillOpacity=".5" />)}

    <H y={330.5} x1={166} x2={1568} color="#0b9b0b" width={1.5} />
    <H y={427.5} x2={1568} color="#e80f1f" width={2} />
    <H y={496} x2={1568} color="#fa0000" width={2} />
    <H y={56.5} x1={1129} x2={1568} color="#0a860a" width={3} />

    {SLOW.map((s, i) => <Poly key={i} pts={s.pts} color={s.color} width={3} dash="6 5" />)}
    {TREND.map((s, i) => <Poly key={i} pts={s.pts} color={s.color} width={3} cap="round" />)}
    {SIGNAL.map((s, i) => <Poly key={i} pts={s.pts} color={s.color} width={1.5} dash="4 3" />)}

    {PRICES.map((c, i) => (
      <g key={i}>
        <path d={`M${c.x} ${c.high}V${c.low}`} stroke="#000" strokeWidth=".9" />
        <rect x={c.x - 1.6} y={c.top} width="3.2" height={Math.max(1.2, c.bottom - c.top)} fill={CANDLE[c.kind]} stroke="#000" strokeWidth=".75" />
      </g>
    ))}
    <H y={379} x2={1568} color="#047f04" width={4} />

    <g fill="none" stroke="#c03030">
      <path d="M1130 134L1223 124.500M990 419L1095 407.500M928 453L967 452L980 438M107 430L134 372L140 365L160 359" />
    </g>
    <g fill="none" stroke="#2c8c2c">
      <path d="M555 455L580 474L607 480M1265 250L1273 283" />
    </g>
    <g fill="none" stroke="#000" strokeWidth="1.700" strokeDasharray="2 4">
      <path d="M1156 318L1185 52M1291 324L1320 60M1335 275L1568 172M1045 424L1090 381M1135 247L1141 312" />
    </g>
    <path d="M1185 47l5 8h-9zM1321 55l5 8h-10zM1141 319l-5-8h10zM1093 377l-3 10-7-8z" />

    {FIBS.map(([y, text, color, box, line, dash]) => (
      <g key={text}>
        <H y={line + 0.5} x1={901} x2={1048} color={color} dash={dash} />
        {box && <rect x="863.5" y={y - 5.5} width="37" height="11" fill="#fff" stroke={color} />}
        <text x="866" y={y + 3} fill={color}>{text}</text>
      </g>
    ))}

    <text x="660" y="399" fill="#fb8a5c">50,00 %</text>
    <text x="660" y="502" fill="#4444e0">61,80 %</text>
    <text x="1213" y="326" fill="#4444e0">61,80 %</text>
    <text x="1213" y="391" fill="#7fe67f">76,40 %</text>
    <text x="413" y="455" fill="#7fe67f">76,40 %</text>
    <text x="413" y="475" fill="#7b4a1a">88,20 %</text>
    <text x="175" y="453" fill="#7fe67f">76,40 %</text>
    <text x="868" y="491" fill="#7b4a1a">88,20 %</text>
    <text x="1033" y="428" fill="#e6e030">23,60 %</text>
    <text x="1033" y="450" fill="#fb9a70">50,00 %</text>
    <text x="167" y="328" fill="#1f9a1f">7.770,2</text>
    <rect x="22.5" y="366.5" width="31" height="12" fill="#fff" stroke="#1a831a" />
    <text x="25" y="376" fill="#1a831a">7.108,0</text>
    <text x="25" y="425" fill="#e8101c">6.437,4</text>
    <text x="25" y="494" fill="#e8101c">5.484,5</text>
    <text x="26" y="522" fontWeight="normal" fill="#222">IT-Finance.com - Tiempo Real</text>

    <Wave x={1129} y={29} text="(1)" />
    <Wave x={1129} y={43} text="(v)" />
    <text x="1131" y="53" fill="#0a860a">11.574,8</text>
    <Wave x={175} y={309} text="1" />
    <Wave x={157} y={327} text="(v)" />
    <Wave x={131} y={344} text="(iii)" />
    <Wave x={153} y={400} text="(w)" />
    <Wave x={175} y={437} text="(a)" />
    <Wave x={327} y={385} text="(b)" />
    <Wave x={1138} y={353} text="(2) ?" />
    <Wave x={1273} y={351} text="(2) ?" />
    <Wave x={859} y={463} text="(i)" />
    <Wave x={986} y={410} text="(iii)" />
    <Wave x={1029} y={448} text="(iv)" />
    <Wave x={925} y={489} text="(ii)" />
    <Wave x={824} y={502} text="(c)" />
    <Wave x={842} y={514} text="2" />
    <Wave x={903} y={518} text="[2 ?]" />
  </Plot>
);

const lag = (pts: Pt[], shift: number): Pt[] =>
  bars.map((x) => {
    let sum = 0;
    for (let k = 0; k < 5; k++) sum += valueAt(pts, x - (k * shift) / 2);
    return [Math.round(x * 10) / 10, Math.round(sum * 2) / 10];
  });

const SLOW_LAG = lag(SLOW_OSC, 7);
const FAST_LAG: Pt[] = FAST_OSC.map(([x, y]) => [x + 2, y]);

const TrainChart = () => (
  <Plot viewBox="23 524 1545 102" preserveAspectRatio="xMinYMin meet" role="img" aria-label="Sistema de trenes">
    <Block x1={23} x2={1352} y1={534} y2={551} fill="#d8f5d4" />
    <Block x1={23} x2={1352} y1={604} y2={621} fill="#fdd9d7" />
    <Grid top={524} bottom={626} rows={[586.5, 560.5]} />
    {bars.slice(1).map((x, i) => {
      const x0 = bars[i];
      const a0 = valueAt(SLOW_OSC, x0);
      const a1 = valueAt(SLOW_OSC, x);
      const fill = a1 > SLOW_LAG[i + 1][1] ? "#f3c3f0" : "#c3c4ee";
      return <polygon key={i} points={`${x0},${a0} ${x},${a1} ${x},${SLOW_LAG[i + 1][1]} ${x0},${SLOW_LAG[i][1]}`} fill={fill} />;
    })}
    <polygon points={`23,604 ${str(SLOW_OSC.map(([x, y]) => [x, Math.max(y, 604)]))} 1352,604`} fill="#a04a3c" fillOpacity=".6" />
    <polygon points={`23,551 ${str(SLOW_OSC.map(([x, y]) => [x, Math.min(y, 551)]))} 1352,551`} fill="#3c9c3c" fillOpacity=".6" />
    <H y={533.5} color="#222" />
    <H y={551} color="#222" />
    <H y={576.5} color="#1414b8" dash="4 3" width={1.5} />
    <H y={603.5} color="#222" />
    <H y={621} color="#222" />
    <Poly pts={FAST_LAG} color="#2f6f3a" dash="3 2" />
    <Runs list={runs(FAST_OSC, (a, b) => (b[1] <= a[1] ? "#000" : "#cf1111"))} width={1.3} />
    <Poly pts={SLOW_LAG} color="#111" width={2} dash="5 3" />
    <Runs list={runs(SLOW_OSC, (a, b) => (b[1] <= a[1] ? BLUE : "#fa0000"))} width={3} />
    {FAST_DOWN.map((p, i) => <Tri key={i} at={p} color="#b40000" />)}
    {FAST_UP.map((p, i) => <Tri key={i} at={p} up color="#0000b4" />)}
    <Edge y={524} />
  </Plot>
);

const WillyChart = () => (
  <Plot viewBox="23 626 1545 81" preserveAspectRatio="xMinYMin meet" role="img" aria-label="Willy Doc">
    <Grid top={626} bottom={707} rows={[641.5, 659.5, 677.5, 694.5]} />
    {WILLY_BANDS.map((b, i) => (
      <Block key={i} x1={b.from} x2={b.to} y1={626} y2={707} fill={WILLY_COLOR[b.kind]} />
    ))}
    <polygon points={`27,650.5 ${str(WILLY.map(([x, y]) => [x, Math.min(y, 650.5)]))} 1352,650.5`} fill="#3a9a3a" fillOpacity=".45" />
    <polygon points={`27,685.5 ${str(WILLY.map(([x, y]) => [x, Math.max(y, 685.5)]))} 1352,685.5`} fill="#6b2a35" fillOpacity=".5" />
    <H y={632.5} color="#333" dash="3 3" />
    <H y={704} color="#333" dash="3 3" />
    <H y={650.5} color="#0000a0" width={1.5} />
    <H y={668} color="#0000a0" width={1.5} dash="4 3" />
    <H y={685.5} color="#b40000" width={1.5} />
    <Runs
      list={runs(WILLY, (a, b) => {
        const mid = (a[1] + b[1]) / 2;
        if (mid < 650.5) return "#00c800";
        if (mid > 686) return "#960000";
        return b[1] <= a[1] ? "#0000c8" : "#ff9900";
      })}
      width={2.6}
    />
    {WILLY_UP.map((p, i) => <Tri key={i} at={p} up color="#0000a8" r={5} />)}
    {WILLY_DOWN.map((p, i) => <Tri key={i} at={p} color="#b40000" r={5} />)}
    <Edge y={626} />
  </Plot>
);

const AwesomeChart = () => (
  <Plot viewBox="23 707 1545 79" preserveAspectRatio="xMinYMin meet" role="img" aria-label="Awesome Evolution">
    <Grid top={707} bottom={786} rows={[728.5, 746.5, 782.5]} />
    {bars.map((x, i) => {
      const a = valueAt(AO_FAST, x);
      const b = valueAt(AO_SLOW, x);
      const rising = i > 0 && a <= valueAt(AO_FAST, bars[i - 1]);
      const color = a < 764 ? (rising ? "#0000f0" : "#f000f0") : rising ? "#009090" : "#f00000";
      return (
        <g key={i} strokeWidth="2.6">
          <path d={`M${x} ${a}V${b}`} stroke={a > b ? "#fbd0cc" : "#c8f0c8"} />
          <path d={`M${x} ${a}V764`} stroke={color} />
        </g>
      );
    })}
    <H y={764.5} color="#1414e8" width={1.5} />
    <Runs list={runs(AO_FAST, (a, b) => (b[1] <= a[1] ? "#050540" : "#b400b4"))} width={2.6} />
    <Runs list={runs(AO_SLOW, (a, b) => (b[1] <= a[1] ? "#66f566" : "#ff9300"))} width={2.6} />
    {AO_UP.map((p, i) => <Tri key={i} at={p} up color="#00eaf0" />)}
    {AO_DOWN.map((p, i) => <Tri key={i} at={p} color="#f5f000" />)}
    <Edge y={707} />
  </Plot>
);

const ForceChart = () => (
  <Plot viewBox="23 786 1545 47" preserveAspectRatio="xMinYMin meet" role="img" aria-label="Barra Fuerza Fondo Mercado">
    <Grid top={786} bottom={833} rows={[798.5, 815.5]} />
    {FORCE_BANDS.map((b, i) => (
      <Block key={i} x1={b.from} x2={b.to} y1={786} y2={833} fill={FORCE_COLOR[b.kind]} />
    ))}
    {bars.map((x, i) => {
      const band = FORCE_BANDS.find((b) => x >= b.from && x < b.to);
      const rise = band && "gvd".includes(band.kind);
      const top = valueAt(FORCE, x);
      return (
        <g key={i}>
          <rect x={x - 2.1} y={top} width="4.300" height={833 - top} fill={rise ? "#3434c4" : "#dc5f5f"} />
          <path d={`M${x + 1} ${top}V833`} stroke={rise ? "#0000aa" : "#b02828"} strokeWidth="1.300" />
        </g>
      );
    })}
    <H y={828.5} color="#7a0010" />
    <Edge y={786} />
    <Edge y={832} />
  </Plot>
);

const TimeAxis = () => (
  <Plot viewBox="23 833 1545 12" preserveAspectRatio="xMinYMin meet" role="img" aria-label="Fechas">
    {DATES.map(([x, text], i) => (
      <g key={i}>
        <path d={`M${x + 0.5} 833v2`} stroke="#7b8d98" />
        <text x={x} y="843" textAnchor="middle" fill="#222">{text}</text>
      </g>
    ))}
  </Plot>
);

/* ---------- bars ---------- */

const Caption = ({ text, icon }: { text: string; icon: React.ReactNode }) => (
  <Legend>
    <LegendItem>
      <Mini aria-label={`Cerrar ${text}`}><Cross /></Mini>
    </LegendItem>
    <LegendItem>
      {icon}
      {text}
    </LegendItem>
  </Legend>
);

const Top = () => (
  <TopBar>
    <Group>
      <Svg w={12} h={12}><path d="M2 5v6M6 3v7M10 1v7" stroke="#158a22" strokeWidth="2" /><path d="M2 4v8M6 2v9M10 0v9" stroke="#158a22" strokeWidth=".8" /></Svg>
    </Group>
    <Group>
      <Svg w={7} h={12}>{[1, 5, 9].map((y) => <path key={y} d={`M.5 ${y}h2v2h-2zM4.500 ${y}h2v2h-2z`} stroke="#56707d" strokeWidth=".8" />)}</Svg>
    </Group>
    <Group>
      <Picker>CL <Chevron /></Picker>
    </Group>
    <Group>
      {["12s", "144s", "1m", "12m", "56m", "1h", "4h", "D", "W", "M", "Q"].map((p) => (
        <Period key={p} $on={p === "D"}>{p}</Period>
      ))}
    </Group>
    <Group>
      <Picker>1 día <Chevron /></Picker>
    </Group>
    <Group>
      {["5kU", "10kU", "35kU"].map((p) => (
        <Period key={p} $on={p === "10kU"}>{p}</Period>
      ))}
    </Group>
    <Group>
      <Picker>10 k unidades <Chevron /></Picker>
    </Group>
    <Group>
      <Picker>
        <Svg w={14} h={13}>
          <path d="M1 2l4 4 4-1 4 2" stroke="#c33" />
          <path d="M1 7l5-4 3 2 4-3" stroke="#1f9a3c" />
          <path d="M1 12.500V10h2v1h2V9h2v2h2V9h4v3.500z" fill="#19a530" />
          <path d="M4 12V10M10 12V9.500" stroke="#e22" strokeWidth="1.500" />
        </Svg>
        Indicadores
      </Picker>
    </Group>
    <Group $pad={2}><Chevron /></Group>
    <Group $gap={4} $pad={6}>
      <Svg w={9} h={9}><rect width="9" height="9" rx="1" fill="#e8eef0" /><path d="M4.500 2v1M4.500 4v3" stroke="#667" strokeWidth="1.300" /></Svg>
      <Svg w={9} h={9}><circle cx="4.500" cy="4.500" r="2.800" fill="#7c858a" /></Svg>
      <Change>-2,50 %</Change>
      <span>8 may 2026</span>
      <Plain>Crudo EE.UU. (1€)</Plain>
    </Group>
    <Spring />
    <Group>
      <Svg w={12} h={14}>
        <path d="M7 2.500A4.500 4.500 0 0 0 2.500 8" stroke="#ec2f3c" strokeWidth="1.800" />
        <path d="M0 6.500h5L2.500 10z" fill="#ec2f3c" />
        <path d="M5 11.500A4.500 4.500 0 0 0 9.500 6" stroke="#1eae2c" strokeWidth="1.800" />
        <path d="M7 7.500h5L9.500 4z" fill="#1eae2c" />
      </Svg>
    </Group>
    <Svg w={34} h={10}>
      <path d="M5 8h6" stroke="#6a7f8a" strokeWidth="1.500" />
      <path d="M16.500 4.500h4v4h-4zM18.500 4V2.500h4v4H21" stroke="#6a7f8a" />
      <path d="M28 2l5 6M33 2l-5 6" stroke="#6a7f8a" strokeWidth="1.300" />
    </Svg>
  </TopBar>
);

const Bottom = () => (
  <Foot>
    <Mini aria-label="Dibujo"><Svg w={14} h={13}><path d="M2 2l7 10" stroke="#d33" strokeWidth="1.500" /><path d="M12 2L4 11" stroke="#ddc21a" strokeWidth="2" /><path d="M2 12h4" stroke="#2a9a2a" strokeWidth="2" /></Svg></Mini>
    <Mini aria-label="Compartir"><Svg w={12} h={12}><path d="M9 2L2 6l7 4" stroke="#fff" /><circle cx="9.500" cy="2.500" r="1.800" fill="#fff" /><circle cx="2.500" cy="6" r="1.800" fill="#fff" /><circle cx="9.500" cy="9.500" r="1.800" fill="#fff" /></Svg></Mini>
    <Mini aria-label="Chat"><Svg w={12} h={12}><rect x="0" y="1" width="9" height="6" rx="1" fill="#8dbcf0" /><path d="M3 4h9v6H8l-2 2v-2H3z" fill="#2d72cf" /><path d="M5 7h5" stroke="#fff" strokeDasharray="1 1" /></Svg></Mini>
    <Mini aria-label="Lista"><Svg w={12} h={12}><rect x="2" y="1" width="8" height="10" fill="#fff" stroke="#555" /><path d="M4 3h4M4 5h4" stroke="#d22" /><path d="M4 7h4M4 9h3" stroke="#292" /></Svg></Mini>
    <Mini aria-label="Órdenes"><Svg w={12} h={12}><path d="M1 1h5v3H1zM3 8h3v3H3z" fill="#22a132" /><path d="M6 1h4v3H6zM6 5h6v2H6zM6 8h3v3H6z" fill="#d62f2f" /><path d="M1 5h5v2H1z" fill="#22a132" /></Svg></Mini>
    <Mini aria-label="Ventanas"><Svg w={13} h={12}><path d="M1 1h7v6H1z" fill="#fff" stroke="#2d5f9c" /><path d="M5 5h7v6H5z" fill="#fff" stroke="#2d5f9c" /><path d="M6 9l2-2 1 2 2-3" stroke="#292" /></Svg></Mini>
    <Mini aria-label="Plegar"><Svg w={6} h={6}><path d="M3 1L1 3l2 2M6 1L4 3l2 2" stroke="#333" /></Svg></Mini>
    <Track>
      <Arrow aria-label="Atrás"><Svg w={4} h={6}><path d="M3 1L1 3l2 2" stroke="#222" /></Svg></Arrow>
      <TrackPad $grow={1257} />
      <Thumb />
      <TrackPad $grow={32} />
      <Arrow aria-label="Adelante"><Svg w={4} h={6}><path d="M1 1l2 2-2 2" stroke="#222" /></Svg></Arrow>
    </Track>
    <Mini aria-label="Deshacer"><Svg w={12} h={12}><path d="M11 10c0-4-3-6-8-5" stroke="#1b62d8" strokeWidth="2" /><path d="M5 1L1 5l4 3z" fill="#1b62d8" /></Svg></Mini>
    <Mini aria-label="Rehacer"><Svg w={12} h={12}><path d="M1 10c0-4 3-6 8-5" stroke="#7fa9cf" strokeWidth="2" /><path d="M7 1l4 4-4 3z" fill="#7fa9cf" /></Svg></Mini>
    <Mini aria-label="Configurar"><Svg w={12} h={12}><path d="M5 1h6v6H5z" fill="#2aa12f" /><path d="M1 6h6v6H1z" fill="#cf2b2b" /><path d="M3 9l6-6" stroke="#fff" strokeWidth="2" /></Svg></Mini>
    <Mini aria-label="Zoom vertical"><Svg w={13} h={12}><circle cx="5" cy="4" r="3.300" fill="#d6e2e8" stroke="#444" /><path d="M7 7l3 3" stroke="#222" strokeWidth="2" /><path d="M11.500 1v8M1 11h8" stroke="#1c55e0" strokeDasharray="2 1" /></Svg></Mini>
    <Mini aria-label="Alejar"><Svg w={12} h={12}><circle cx="5" cy="5" r="3.800" fill="#fff" stroke="#333" /><path d="M3 5h4" stroke="#1414c8" strokeWidth="1.300" /><path d="M8 8l3 3" stroke="#111" strokeWidth="2" /></Svg></Mini>
    <Mini aria-label="Acercar"><Svg w={12} h={12}><circle cx="5" cy="5" r="3.800" fill="#fff" stroke="#333" /><path d="M3 5h4M5 3v4" stroke="#1414c8" strokeWidth="1.300" /><path d="M8 8l3 3" stroke="#111" strokeWidth="2" /></Svg></Mini>
    <Mini aria-label="Ajustar"><Svg w={8} h={12}><path d="M0 2h8" stroke="#333" strokeWidth="2" strokeDasharray="2 1" /><path d="M5 4v4M2 7h6L5 11z" stroke="#1c62d8" fill="#1c62d8" /></Svg></Mini>
  </Foot>
);

export default function App() {
  return (
    <Page>
      <Global />
      <Top />
      <Body>
        <Tools aria-label="Herramientas de dibujo">
          <Fold aria-label="Subir"><Chevron up /></Fold>
          <ToolList>
            {TOOLS.map(([name, icon], i) => (
              <Tool key={name} aria-label={name} $on={i === 0}>
                <Svg>{icon}</Svg>
              </Tool>
            ))}
          </ToolList>
          <Fold aria-label="Bajar"><Chevron /></Fold>
          <ToolFoot>
            <Tool aria-label="Añadir"><Svg><rect x="5" y="3" width="8" height="9" fill="#eee" stroke="#777" /><circle cx="5" cy="4" r="3.300" fill="#178c2a" /><path d="M5 2.500v3M3.500 4h3" stroke="#fff" /><circle cx="13" cy="12" r="2.500" stroke="#333" fill="#ddd" /></Svg></Tool>
            <Tool aria-label="Más"><Svg><path d="M4 8h2M8 8h2M12 8h2" stroke="#222" strokeWidth="2" /></Svg></Tool>
          </ToolFoot>
        </Tools>
        <Charts>
          <Panel>
            <PriceChart />
            <Axis
              top={19}
              height={505}
              ticks={PRICE_LEVELS.map(priceY)}
              marks={[
                ...PRICE_LEVELS.filter((v) => v !== 9500).map((v) => ({
                  y: Math.floor(priceY(v)),
                  text: `${Math.floor(v / 1000)}.${String(v % 1000).padStart(3, "0")}`,
                })),
                { y: 190, text: "9.639,2", color: "#8c0000", box: true },
                { y: 197, text: "9.629,6", color: "#8c0000", box: true },
                { y: 206, text: "9.516,9", color: "#a87400", box: true },
              ]}
            />
            <Legend>
              <LegendItem>
                <Mini aria-label="Bajar panel"><Pin color="#e02020" /></Mini>
                <Mini aria-label="Subir panel"><Pin color="#1fa52a" up /></Mini>
                <Mini aria-label="Cerrar"><Cross /></Mini>
              </LegendItem>
              <LegendItem><Swatch $fill="#dfe9ee" />Precio</LegendItem>
              <LegendItem><Svg w={8} h={8}><path d="M0 1.500h1M0 4h1M0 6.500h1M3 1.500h5M3 4h5M3 6.500h5" stroke="#333" /></Svg></LegendItem>
              <LegendItem><Swatch $fill="#dfe9ee" />Cierre (W)</LegendItem>
              <LegendItem><Swatch $fill="#6f8793" />Tunel Domenec v4 (t t t t t)</LegendItem>
              <LegendItem><Stripes colors={["#111", "#2ba52b", "#e9e215", "#1b3fd0", "#f08c1c", "#222"]} />Control Total Doc v.6</LegendItem>
              <LegendItem><Swatch $fill="#000" />Multi Avisos (3 f 3 1,5 70 f f)</LegendItem>
              <LegendItem><Swatch $fill="#dfe9ee" />DS_CotasHist (1 t t t 3 1 1 f f f f f f f f ...)</LegendItem>
            </Legend>
            <Title>CL, D<br />Crudo EE.UU. (1€)</Title>
          </Panel>
          <Panel>
            <TrainChart />
            <Axis
              top={524}
              height={102}
              ticks={[533.5, 551.5, 568.5, 576.5, 594.5, 603.5, 621.5]}
              marks={[
                { y: 533, text: "100", box: true },
                { y: 551, text: "80", box: true },
                { y: 562, text: "66,523", box: true },
                { y: 578, text: "50", color: "#1414b8", box: true },
                { y: 569, text: "58,895", color: "#f01010", box: true },
                { y: 589, text: "34,481", box: true },
                { y: 604, text: "20", box: true },
                { y: 595, text: "29,605", color: "#f01010", box: true },
                { y: 619, text: "0", box: true },
              ]}
            />
            <Caption text="Sistema de trenes Doc v4 (f f)" icon={<Stripes colors={["#777", "#fff", "#111", "#111"]} />} />
          </Panel>
          <Panel>
            <WillyChart />
            <Axis
              top={626}
              height={81}
              ticks={[632.5, 650.5, 668.5, 685.5, 704.5]}
              marks={[
                { y: 632, text: "0", box: true },
                { y: 650, text: "-25", color: "#1414b8", box: true },
                { y: 664, text: "-50", color: "#1414b8", box: true },
                { y: 674, text: "-54,912", color: "#f09000", box: true },
                { y: 685, text: "-75", color: "#d01010", box: true },
                { y: 701, text: "-100", box: true },
              ]}
            />
            <Caption text="Willy Doc (t)" icon={<Swatch $fill="#6f8793" />} />
          </Panel>
          <Panel>
            <AwesomeChart />
            <Axis
              top={707}
              height={79}
              ticks={[711.5, 728.5, 746.5, 764.5, 782.5]}
              marks={[
                { y: 712, text: "3.000" },
                { y: 728, text: "2.000" },
                { y: 746, text: "1.000" },
                { y: 759, text: "20,074", color: "#e01010", box: true },
                { y: 766, text: "-100,10", color: "#c010c0", box: true },
                { y: 781, text: "-1.000" },
                { y: 773, text: "-190,16", color: "#e01010", box: true },
              ]}
            />
            <Caption text="Awesome Evolution Doc" icon={<Swatch $fill="#6f8793" />} />
          </Panel>
          <Panel>
            <ForceChart />
            <Axis
              top={786}
              height={47}
              ticks={[790.5, 798.5, 807.5, 815.5, 828.5]}
              marks={[
                { y: 798, text: "4" },
                { y: 815, text: "2,0029", color: "#e01010", box: true },
                { y: 827, text: "0,5000", box: true },
              ]}
            />
            <Caption text="Barra Fuerza Fondo Mercado v4 (f)" icon={<Stripes colors={["#111", "#111", "#888", "#fff"]} />} />
          </Panel>
          <Panel>
            <TimeAxis />
            <Scale viewBox="1568 833 32 12" />
          </Panel>
        </Charts>
      </Body>
      <Bottom />
    </Page>
  );
}
